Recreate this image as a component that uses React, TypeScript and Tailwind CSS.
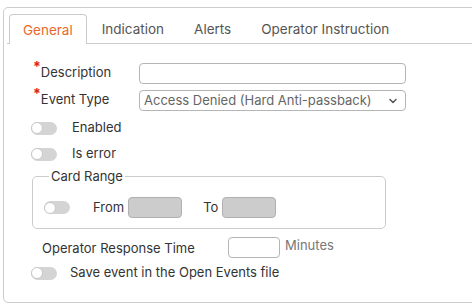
import { ChevronDown } from "lucide-react"

const tabs = ["General", "Indication", "Alerts", "Operator Instruction"]

function Toggle() {
  return (
    <span className="flex h-[13px] w-[26px] shrink-0 items-center rounded-full bg-[#d4d4d4]">
      <span className="h-[12px] w-[12px] rounded-full border border-[#c8c8c8] bg-white" />
    </span>
  )
}

function Required({ label }: { label: string }) {
  return (
    <span className="mb-[4px] flex w-[106px] shrink-0 items-start">
      <span className="text-[14px] leading-[10px] font-bold text-[#e0201b]">*</span>
      <span className="leading-[20px]">{label}</span>
    </span>
  )
}

export default function App() {
  return (
    <div
      className="h-[304px] w-[472px] overflow-hidden bg-white pt-[7px] pl-[3px] text-[13px] text-[#333]"
      style={{ fontFamily: "Inter, 'Open Sans', sans-serif" }}
    >
      <div className="h-[296px] w-[490px] rounded-[5px] border border-[#cccccc]">
        {/* Tabs */}
        <div className="ml-[3px] flex h-[36px] items-end border-b border-[#cccccc] pl-[2px] text-[13.5px] leading-[20px]">
          {tabs.map((tab, i) => (
            <div
              key={tab}
              className={
                i === 0
                  ? "-mb-px flex h-[30px] items-center rounded-t-[4px] border border-b-0 border-[#cccccc] bg-white px-[13px] text-[#e8692a]"
                  : "-mb-px flex h-[30px] items-center border border-transparent px-[14px] text-[#555]"
              }
            >
              {tab}
            </div>
          ))}
        </div>

        {/* General form */}
        <div className="flex flex-col pl-[29px]">
          <div className="mt-[19px] flex h-[21px] items-center">
            <Required label="Description" />
            <div className="h-[21px] w-[267px] rounded-[4px] border border-[#b5b5b5]" />
          </div>
          <div className="mt-[6px] flex h-[21px] items-center">
            <Required label="Event Type" />
            <div className="flex h-[21px] w-[267px] items-center justify-between rounded-[4px] border border-[#b5b5b5] pr-[6px] pl-[4px] text-[#666]">
              <span>Access Denied (Hard Anti-passback)</span>
              <ChevronDown size={12} strokeWidth={3} className="text-[#555]" />
            </div>
          </div>

          <div className="-ml-[2px] mt-[4px] flex h-[26px] items-center gap-[15px]">
            <Toggle />
            <span>Enabled</span>
          </div>
          <div className="-ml-[2px] flex h-[26px] items-center gap-[15px]">
            <Toggle />
            <span>Is error</span>
          </div>

          <fieldset className="-ml-[1px] mt-[1px] w-[354px] rounded-[5px] border border-[#cccccc] pr-[11px] pb-[10px] pl-[11px]">
            <legend className="ml-[5px] px-[2px] leading-[16px]">Card Range</legend>
            <div className="mt-[13px] flex items-center">
              <Toggle />
              <span className="ml-[23px]">From</span>
              <div className="ml-[4px] h-[21px] w-[54px] rounded-[4px] border border-[#b0b0b0] bg-[#cccccc]" />
              <span className="ml-[21px]">To</span>
              <div className="ml-[4px] h-[21px] w-[54px] rounded-[4px] border border-[#b0b0b0] bg-[#cccccc]" />
            </div>
          </fieldset>

          <div className="mt-[8px] ml-[9px] flex items-start">
            <span className="mt-[1px] w-[186px] leading-[20px]">Operator Response Time</span>
            <div className="h-[21px] w-[52px] rounded-[4px] border border-[#b5b5b5]" />
            <span className="ml-[5px] leading-[17px] text-[#777]">Minutes</span>
          </div>

          <div className="-ml-[2px] mt-[2px] flex h-[26px] items-center gap-[13px]">
            <Toggle />
            <span>Save event in the Open Events file</span>
          </div>
        </div>
      </div>
    </div>
  )
}
